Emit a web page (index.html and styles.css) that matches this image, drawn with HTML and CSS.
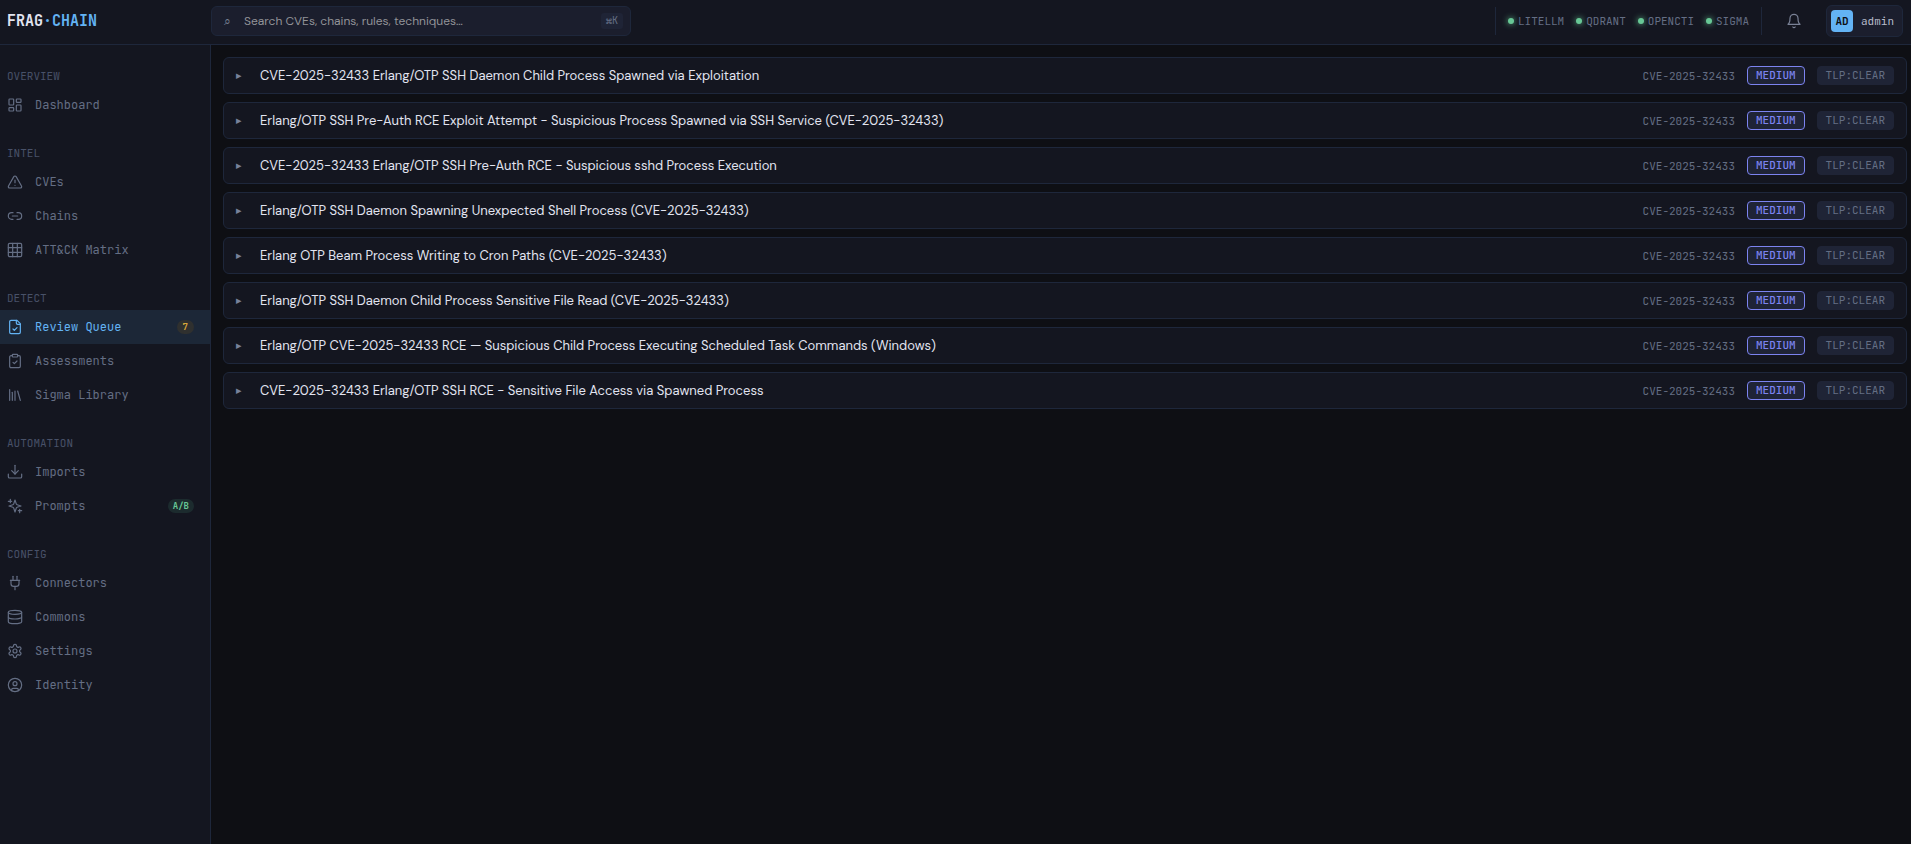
FILE: index.html
```
<!DOCTYPE html>
<html lang="en">
<head>
  <meta charset="UTF-8">
  <meta name="viewport" content="width=device-width, initial-scale=1">
  <title>FRAG·CHAIN - Review Queue</title>
  <link rel="stylesheet" href="styles.css">
</head>
<body>
  <header class="topbar">
    <a class="brand" href="#">FRAG<span>·CHAIN</span></a>

    <div class="search">
      <label for="search" aria-label="Search">⌕</label>
      <input id="search" type="text" placeholder="Search CVEs, chains, rules, techniques…">
      <kbd>⌘K</kbd>
    </div>

    <div class="topbar-right">
      <ul class="services">
        <li>LITELLM</li>
        <li>QDRANT</li>
        <li>OPENCTI</li>
        <li>SIGMA</li>
      </ul>
      <button class="bell" aria-label="Notifications">
        <svg class="icon" viewBox="0 0 24 24"><path d="M10.3 21a1.94 1.94 0 0 0 3.4 0"/><path d="M6 8a6 6 0 0 1 12 0c0 7 3 9 3 9H3s3-2 3-9"/></svg>
      </button>
      <button class="user"><span class="avatar">AD</span>admin</button>
    </div>
  </header>

  <div class="layout">
    <nav class="sidebar">
      <section>
        <h2>OVERVIEW</h2>
        <a href="#">
          <svg class="icon" viewBox="0 0 24 24"><rect x="3" y="3" width="7" height="9" rx="1"/><rect x="14" y="3" width="7" height="5" rx="1"/><rect x="14" y="12" width="7" height="9" rx="1"/><rect x="3" y="16" width="7" height="5" rx="1"/></svg>
          Dashboard
        </a>
      </section>

      <section>
        <h2>INTEL</h2>
        <a href="#">
          <svg class="icon" viewBox="0 0 24 24"><path d="m21.73 18-8-14a2 2 0 0 0-3.48 0l-8 14A2 2 0 0 0 4 21h16a2 2 0 0 0 1.73-3Z"/><path d="M12 9v4"/><path d="M12 17h.01"/></svg>
          CVEs
        </a>
        <a href="#">
          <svg class="icon" viewBox="0 0 24 24"><path d="M9 17H7A5 5 0 0 1 7 7h2"/><path d="M15 7h2a5 5 0 1 1 0 10h-2"/><path d="M8 12h8"/></svg>
          Chains
        </a>
        <a href="#">
          <svg class="icon" viewBox="0 0 24 24"><rect x="2" y="2" width="20" height="20" rx="2"/><path d="M2 8.500h20M2 15.500h20M8.500 2v20M15.500 2v20"/></svg>
          ATT&amp;CK Matrix
        </a>
      </section>

      <section>
        <h2>DETECT</h2>
        <a class="active" href="#" aria-current="page">
          <svg class="icon" viewBox="0 0 24 24"><path d="M15 2H6a2 2 0 0 0-2 2v16a2 2 0 0 0 2 2h12a2 2 0 0 0 2-2V7Z"/><path d="M14 2v4a2 2 0 0 0 2 2h4"/><path d="m9 15 2 2 4-4"/></svg>
          Review Queue
          <span class="count">7</span>
        </a>
        <a href="#">
          <svg class="icon" viewBox="0 0 24 24"><rect x="8" y="2" width="8" height="4" rx="1"/><path d="M16 4h2a2 2 0 0 1 2 2v14a2 2 0 0 1-2 2H6a2 2 0 0 1-2-2V6a2 2 0 0 1 2-2h2"/><path d="m9 14 2 2 4-4"/></svg>
          Assessments
        </a>
        <a href="#">
          <svg class="icon" viewBox="0 0 24 24"><path d="m16 6 4 14"/><path d="M12 6v14"/><path d="M8 8v12"/><path d="M4 4v16"/></svg>
          Sigma Library
        </a>
      </section>

      <section>
        <h2>AUTOMATION</h2>
        <a href="#">
          <svg class="icon" viewBox="0 0 24 24"><path d="M12 2v13"/><path d="m7 10 5 5 5-5"/><path d="M2 15v4a2 2 0 0 0 2 2h16a2 2 0 0 0 2-2v-4"/></svg>
          Imports
        </a>
        <a href="#">
          <svg class="icon" viewBox="0 0 24 24"><path d="m12 3-1.900 5.800a2 2 0 0 1-1.300 1.300L3 12l5.800 1.900a2 2 0 0 1 1.300 1.300L12 21l1.900-5.800a2 2 0 0 1 1.300-1.300L21 12l-5.800-1.900a2 2 0 0 1-1.300-1.300Z"/><path d="M5 2v5M2 5h5M19 17v5M17 19h5"/></svg>
          Prompts
          <span class="count green">A/B</span>
        </a>
      </section>

      <section>
        <h2>CONFIG</h2>
        <a href="#">
          <svg class="icon" viewBox="0 0 24 24"><path d="M12 22v-5"/><path d="M9 8V2"/><path d="M15 8V2"/><path d="M5 8h14"/><path d="M18 8v5a4 4 0 0 1-4 4h-4a4 4 0 0 1-4-4V8"/></svg>
          Connectors
        </a>
        <a href="#">
          <svg class="icon" viewBox="0 0 24 24"><ellipse cx="12" cy="5" rx="10" ry="3"/><path d="M2 5v14a10 3 0 0 0 20 0V5"/><path d="M2 12a10 3 0 0 0 20 0"/></svg>
          Commons
        </a>
        <a href="#">
          <svg class="icon" viewBox="0 0 24 24"><path d="M12.220 2h-.44a2 2 0 0 0-2 2v.18a2 2 0 0 1-1 1.730l-.43.25a2 2 0 0 1-2 0l-.15-.08a2 2 0 0 0-2.730.73l-.22.38a2 2 0 0 0 .73 2.730l.15.1a2 2 0 0 1 1 1.720v.51a2 2 0 0 1-1 1.740l-.15.09a2 2 0 0 0-.73 2.730l.22.38a2 2 0 0 0 2.730.73l.15-.08a2 2 0 0 1 2 0l.43.25a2 2 0 0 1 1 1.730V20a2 2 0 0 0 2 2h.44a2 2 0 0 0 2-2v-.18a2 2 0 0 1 1-1.730l.43-.25a2 2 0 0 1 2 0l.15.08a2 2 0 0 0 2.730-.73l.22-.39a2 2 0 0 0-.73-2.730l-.15-.08a2 2 0 0 1-1-1.740v-.5a2 2 0 0 1 1-1.740l.15-.09a2 2 0 0 0 .73-2.730l-.22-.38a2 2 0 0 0-2.730-.73l-.15.08a2 2 0 0 1-2 0l-.43-.25a2 2 0 0 1-1-1.730V4a2 2 0 0 0-2-2z"/><circle cx="12" cy="12" r="3"/></svg>
          Settings
        </a>
        <a href="#">
          <svg class="icon" viewBox="0 0 24 24"><circle cx="12" cy="12" r="10"/><circle cx="12" cy="10" r="3"/><path d="M7 20.660V19a2 2 0 0 1 2-2h6a2 2 0 0 1 2 2v1.660"/></svg>
          Identity
        </a>
      </section>
    </nav>

    <main class="queue">
      <details class="rule">
        <summary>
          <span class="title">CVE-2025-32433 Erlang/OTP SSH Daemon Child Process Spawned via Exploitation</span>
          <span class="cve">CVE-2025-32433</span>
          <span class="badge medium">MEDIUM</span>
          <span class="badge">TLP:CLEAR</span>
        </summary>
      </details>
      <details class="rule">
        <summary>
          <span class="title">Erlang/OTP SSH Pre-Auth RCE Exploit Attempt - Suspicious Process Spawned via SSH Service (CVE-2025-32433)</span>
          <span class="cve">CVE-2025-32433</span>
          <span class="badge medium">MEDIUM</span>
          <span class="badge">TLP:CLEAR</span>
        </summary>
      </details>
      <details class="rule">
        <summary>
          <span class="title">CVE-2025-32433 Erlang/OTP SSH Pre-Auth RCE - Suspicious sshd Process Execution</span>
          <span class="cve">CVE-2025-32433</span>
          <span class="badge medium">MEDIUM</span>
          <span class="badge">TLP:CLEAR</span>
        </summary>
      </details>
      <details class="rule">
        <summary>
          <span class="title">Erlang/OTP SSH Daemon Spawning Unexpected Shell Process (CVE-2025-32433)</span>
          <span class="cve">CVE-2025-32433</span>
          <span class="badge medium">MEDIUM</span>
          <span class="badge">TLP:CLEAR</span>
        </summary>
      </details>
      <details class="rule">
        <summary>
          <span class="title">Erlang OTP Beam Process Writing to Cron Paths (CVE-2025-32433)</span>
          <span class="cve">CVE-2025-32433</span>
          <span class="badge medium">MEDIUM</span>
          <span class="badge">TLP:CLEAR</span>
        </summary>
      </details>
      <details class="rule">
        <summary>
          <span class="title">Erlang/OTP SSH Daemon Child Process Sensitive File Read (CVE-2025-32433)</span>
          <span class="cve">CVE-2025-32433</span>
          <span class="badge medium">MEDIUM</span>
          <span class="badge">TLP:CLEAR</span>
        </summary>
      </details>
      <details class="rule">
        <summary>
          <span class="title">Erlang/OTP CVE-2025-32433 RCE — Suspicious Child Process Executing Scheduled Task Commands (Windows)</span>
          <span class="cve">CVE-2025-32433</span>
          <span class="badge medium">MEDIUM</span>
          <span class="badge">TLP:CLEAR</span>
        </summary>
      </details>
      <details class="rule">
        <summary>
          <span class="title">CVE-2025-32433 Erlang/OTP SSH RCE - Sensitive File Access via Spawned Process</span>
          <span class="cve">CVE-2025-32433</span>
          <span class="badge medium">MEDIUM</span>
          <span class="badge">TLP:CLEAR</span>
        </summary>
      </details>
    </main>
  </div>
</body>
</html>
```
FILE: styles.css
```
:root {
  --bg: #0e0f14;
  --panel: #141620;
  --raised: #1b1e2d;
  --chip: #1f2436;
  --border: #1e273b;
  --text: #e2e4f0;
  --muted: #646e84;
  --faint: #485168;
  --blue: #63b3f4;
  --green: #68c896;
  --violet: #7c83f0;
  --mono: "JetBrains Mono", "DejaVu Sans Mono", monospace;
  --sans: "DM Sans", "Noto Sans", sans-serif;
}

* {
  box-sizing: border-box;
}

body {
  margin: 0;
  min-height: 100vh;
  display: flex;
  flex-direction: column;
  background: var(--bg);
  color: var(--text);
  font-family: var(--sans);
  font-size: 13px;
}

a {
  text-decoration: none;
}

button {
  font-family: var(--mono);
  cursor: pointer;
}

.icon {
  width: 16px;
  height: 16px;
  flex: none;
  fill: none;
  stroke: currentColor;
  stroke-width: 1.8;
  stroke-linecap: round;
  stroke-linejoin: round;
}

/* top bar */
.topbar {
  display: flex;
  align-items: center;
  padding: 5px 8px 7px 0;
  background: var(--panel);
  border-bottom: 1px solid var(--border);
}

.brand {
  width: 211px;
  padding-left: 7px;
  color: var(--text);
  font-family: var(--mono);
  font-size: 15px;
  font-weight: 600;
  line-height: 20px;
}

.brand span {
  color: var(--blue);
}

.search {
  display: flex;
  align-items: center;
  gap: 12px;
  width: 420px;
  height: 30px;
  padding: 0 7px 0 12px;
  background: var(--raised);
  border: 1px solid var(--border);
  border-radius: 6px;
}

.search label {
  width: 8px;
  color: #7a8296;
  font-size: 12px;
}

.search input {
  flex: 1;
  min-width: 0;
  padding: 0;
  background: none;
  border: 0;
  outline: 0;
  color: var(--text);
  font-family: var(--sans);
  font-size: 12px;
}

.search input::placeholder {
  color: #929398;
}

.search kbd {
  padding: 0 5px;
  background: var(--chip);
  border-radius: 3px;
  color: var(--muted);
  font-family: var(--mono);
  font-size: 10px;
  line-height: 16px;
}

.topbar-right {
  display: flex;
  align-items: center;
  margin-left: auto;
}

.services {
  display: flex;
  align-items: center;
  gap: 12px;
  height: 28px;
  margin: 0;
  padding: 0 12px;
  list-style: none;
  border-left: 1px solid var(--border);
  border-right: 1px solid var(--border);
  color: var(--muted);
  font-family: var(--mono);
  font-size: 11px;
}

.services li {
  display: flex;
  align-items: center;
  gap: 4px;
}

.services li::before {
  content: "";
  width: 6px;
  height: 6px;
  border-radius: 50%;
  background: var(--green);
  box-shadow: 0 0 6px var(--green);
}

.bell {
  display: flex;
  padding: 8px;
  margin: 0 16px;
  background: none;
  border: 0;
  color: #7a8296;
}

.user {
  display: flex;
  align-items: center;
  gap: 8px;
  height: 32px;
  padding: 0 8px 0 4px;
  background: var(--raised);
  border: 1px solid var(--border);
  border-radius: 6px;
  color: #b8bccb;
  font-size: 11px;
}

.avatar {
  width: 22px;
  border-radius: 4px;
  background: var(--blue);
  color: var(--bg);
  font-weight: bold;
  line-height: 22px;
  text-align: center;
}

.layout {
  flex: 1;
  display: flex;
}

/* sidebar */
.sidebar {
  flex: none;
  width: 211px;
  background: var(--panel);
  border-right: 1px solid var(--border);
  font-family: var(--mono);
}

.sidebar section {
  padding-top: 23px;
}

.sidebar h2 {
  margin: 0 0 4px;
  padding-left: 7px;
  color: var(--faint);
  font-size: 11px;
  font-weight: normal;
  line-height: 16px;
}

.sidebar a {
  display: flex;
  align-items: center;
  gap: 12px;
  height: 34px;
  padding: 0 16px 0 7px;
  color: var(--muted);
  font-size: 12px;
}

.sidebar a.active {
  background: #1c2737;
  color: var(--blue);
}

.count {
  margin-left: auto;
  padding: 0 6px;
  border-radius: 7px;
  background: #2f302f;
  color: #d9a93a;
  font-size: 9px;
  font-weight: bold;
  line-height: 14px;
}

.count.green {
  padding: 0 5px;
  background: #1c2b2e;
  color: var(--green);
}

/* review queue */
.queue {
  flex: 1;
  min-width: 0;
  display: flex;
  flex-direction: column;
  gap: 8px;
  padding: 12px 4px 12px 12px;
}

.rule {
  background: var(--panel);
  border: 1px solid var(--border);
  border-radius: 6px;
}

.rule summary {
  display: flex;
  align-items: center;
  gap: 12px;
  padding: 8px 12px;
  cursor: pointer;
}

.rule summary::before {
  content: "▸";
  width: 12px;
  color: #78829a;
  font-family: "DejaVu Sans", sans-serif;
  font-size: 11px;
  line-height: 12px;
}

.rule[open] summary::before {
  content: "▾";
}

.title {
  flex: 1;
  min-width: 0;
  line-height: 18px;
}

.cve {
  color: var(--muted);
  font-family: var(--mono);
  font-size: 11px;
}

.badge {
  padding: 0 8px;
  border: 1px solid var(--chip);
  border-radius: 4px;
  background: var(--chip);
  color: var(--muted);
  font-family: var(--mono);
  font-size: 11px;
  line-height: 17px;
}

.badge.medium {
  border-color: var(--violet);
  color: var(--violet);
  font-weight: 500;
}
```
